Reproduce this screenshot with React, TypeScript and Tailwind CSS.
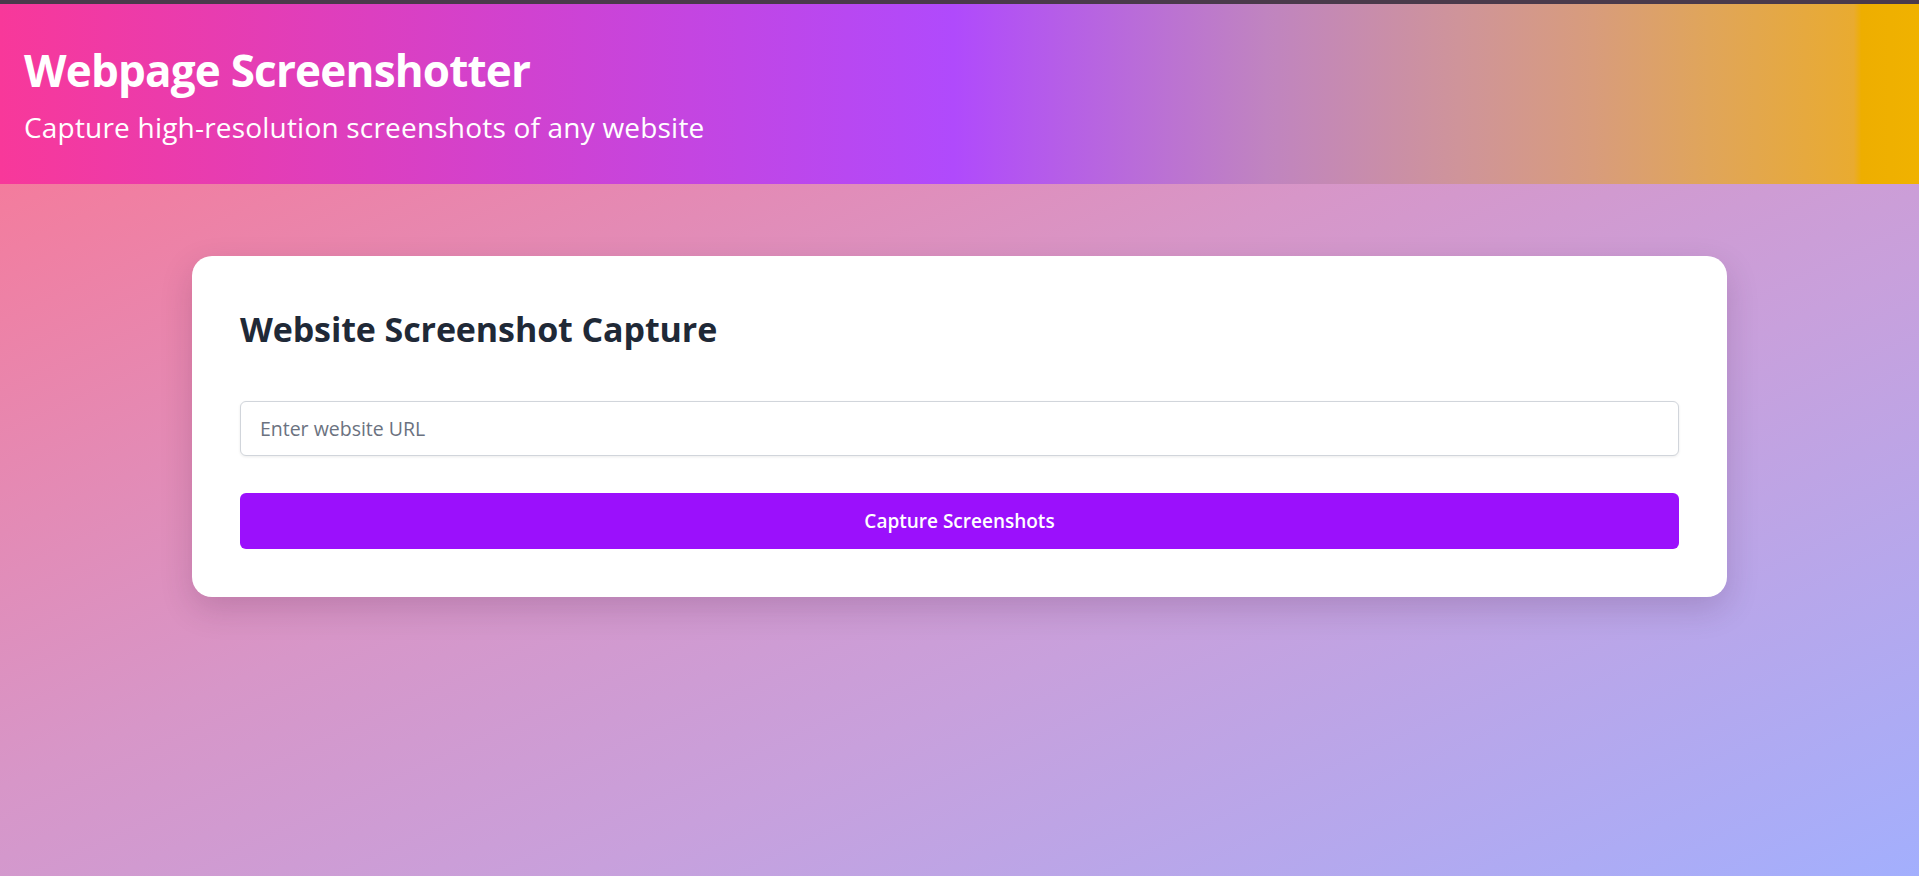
import React from "react";

export default function App() {
  return (
    <div
      className="min-h-screen w-full bg-[linear-gradient(to_bottom_right,#fc7490_0%,#d796c8_45%,#c8a0dc_65%,#a3affd_100%)]"
      style={{ fontFamily: '"Open Sans", "Noto Sans", sans-serif' }}
    >
      <div className="h-[4px] w-full bg-[#4a3a4b]" />
      <header className="bg-[linear-gradient(90deg,#f8389a_0%,#b04afc_49.7%,#c084c0_66%,#cf949a_76%,#d89c7c_83%,#e0a55a_89%,#e9ab30_96.6%,#eeae00_97%,#f0b200_100%)] pl-6 pt-10 pb-[39px] text-white">
        <h1 className="text-[44px] font-bold leading-[1.2] tracking-[-0.8px]">Webpage Screenshotter</h1>
        <p className="mt-[12px] text-[28px] leading-[1.3] tracking-[0.2px]">
          Capture high-resolution screenshots of any website
        </p>
      </header>
      <main className="pt-[72px] pb-10">
        <div className="mx-auto w-[80%] rounded-[20px] bg-white p-12 shadow-[0_12px_32px_rgba(60,20,60,0.18)]">
          <h2 className="mb-[46px] text-[34px] font-bold leading-[1.5] text-[#1f2937] tracking-[-0.1px]">
            Website Screenshot Capture
          </h2>
          <input
            type="text"
            placeholder="Enter website URL"
            className="block h-[55px] w-full rounded-[6px] border border-[#d1d5db] bg-white px-[19px] text-[19.5px] text-[#1f2937] placeholder:text-[#6b7280] shadow-[0_1px_3px_rgba(0,0,0,0.08)] outline-none"
          />
          <button className="mt-[37px] flex h-[56px] w-full items-center justify-center rounded-[6px] bg-[#9b10fc] text-[19px] font-semibold text-white">
            Capture Screenshots
          </button>
        </div>
      </main>
    </div>
  );
}
